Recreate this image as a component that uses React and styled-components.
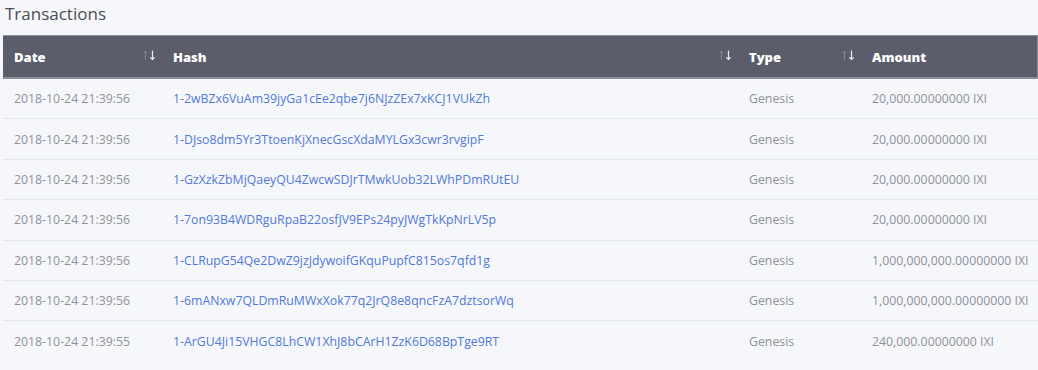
import React from 'react'
import styled, { createGlobalStyle } from 'styled-components'

const Global = createGlobalStyle`
  body {
    margin: 0;
    background: #f6f7fb;
    font-family: "Open Sans", "Noto Sans", sans-serif;
  }
`
const Page = styled.div`
  padding: 0 0 0 3px;
`
const Title = styled.h2`
  margin: 0;
  padding: 2px 0 0 2px;
  height: 33px;
  font-size: 17px;
  font-weight: 400;
  color: #4b4d55;
  line-height: 24px;
`
const Table = styled.table`
  width: 100%;
  border-collapse: collapse;
  table-layout: fixed;
`
const Head = styled.th`
  position: relative;
  height: 41px;
  padding: 0 11px;
  background: #5b5d6b;
  border-top: 1px solid #8b8e9b;
  border-bottom: 2px solid #8b8e9b;
  color: #fff;
  font-size: 13px;
  font-weight: 800;
  text-align: left;
  &:last-child {
    border-right: 1px solid #8b8e9b;
  }
`
const Sort = styled.svg`
  position: absolute;
  right: 6px;
  top: 14px;
`
const Cell = styled.td`
  height: 39.4px;
  padding: 0 11px;
  border-bottom: 1px solid ${p => (p.$last ? 'transparent' : '#e5e7ee')};
  font-size: 12.3px;
  color: ${p => (p.$link ? '#5079d8' : '#8f9199')};
  white-space: nowrap;
`

const rows = [
  ['2018-10-24 21:39:56', '1-2wBZx6VuAm39jyGa1cEe2qbe7j6NJzZEx7xKCJ1VUkZh', '20,000.00000000 IXI'],
  ['2018-10-24 21:39:56', '1-DJso8dm5Yr3TtoenKjXnecGscXdaMYLGx3cwr3rvgipF', '20,000.00000000 IXI'],
  ['2018-10-24 21:39:56', '1-GzXzkZbMjQaeyQU4ZwcwSDJrTMwkUob32LWhPDmRUtEU', '20,000.00000000 IXI'],
  ['2018-10-24 21:39:56', '1-7on93B4WDRguRpaB22osfJV9EPs24pyJWgTkKpNrLV5p', '20,000.00000000 IXI'],
  ['2018-10-24 21:39:56', '1-CLRupG54Qe2DwZ9jzJdywoifGKquPupfC815os7qfd1g', '1,000,000,000.00000000 IXI'],
  ['2018-10-24 21:39:56', '1-6mANxw7QLDmRuMWxXok77q2JrQ8e8qncFzA7dztsorWq', '1,000,000,000.00000000 IXI'],
  ['2018-10-24 21:39:55', '1-ArGU4Ji15VHGC8LhCW1XhJ8bCArH1ZzK6D68BpTge9RT', '240,000.00000000 IXI']
]

const SortIcon = () => (
  <Sort width="14" height="11" viewBox="0 0 14 11" fill="none" strokeWidth="1">
    <path d="M3.5 10V1.2M1.5 3.2L3.5 1.2L5.5 3.2" stroke="#858898" />
    <path d="M10.5 0.5V9.5M8.3 7.3L10.5 9.5L12.7 7.3" stroke="#ecedf2" strokeWidth="1.2" />
  </Sort>
)

const Header = ({ label, sortable }) => (
  <Head>
    {label}
    {sortable && <SortIcon />}
  </Head>
)

const App = () => {
  return (
    <Page>
      <Global />
      <Title>Transactions</Title>
      <Table>
        <colgroup>
          <col style={{ width: 159 }} />
          <col style={{ width: 576 }} />
          <col style={{ width: 123 }} />
          <col />
        </colgroup>
        <thead>
          <tr>
            <Header label="Date" sortable />
            <Header label="Hash" sortable />
            <Header label="Type" sortable />
            <Header label="Amount" />
          </tr>
        </thead>
        <tbody>
          {rows.map(([date, hash, amount], i) => {
            const last = i === rows.length - 1
            return (
              <tr key={hash}>
                <Cell $last={last}>{date}</Cell>
                <Cell $last={last} $link>{hash}</Cell>
                <Cell $last={last}>Genesis</Cell>
                <Cell $last={last}>{amount}</Cell>
              </tr>
            )
          })}
        </tbody>
      </Table>
    </Page>
  )
}

export default App
